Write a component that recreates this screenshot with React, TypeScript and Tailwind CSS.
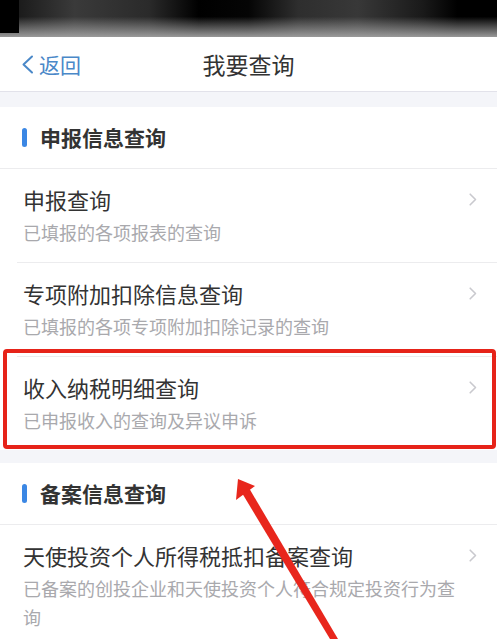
import React from "react";

type Item = { title: string; desc: string };

const GROUPS: { heading: string; items: Item[] }[] = [
  {
    heading: "申报信息查询",
    items: [
      { title: "申报查询", desc: "已填报的各项报表的查询" },
      { title: "专项附加扣除信息查询", desc: "已填报的各项专项附加扣除记录的查询" },
      { title: "收入纳税明细查询", desc: "已申报收入的查询及异议申诉" },
    ],
  },
  {
    heading: "备案信息查询",
    items: [
      {
        title: "天使投资个人所得税抵扣备案查询",
        desc: "已备案的创投企业和天使投资个人符合规定投资行为查询",
      },
    ],
  },
];

function Chevron() {
  return (
    <svg width="8" height="13" viewBox="0 0 8 13" fill="none" className="mt-[9px] shrink-0">
      <path d="M1.2 1.2l5.3 5.3-5.3 5.3" stroke="#c9c9ce" strokeWidth="1.6" strokeLinecap="round" strokeLinejoin="round" />
    </svg>
  );
}

function Row({ item, last }: { item: Item; last: boolean }) {
  return (
    <div className="pl-[17px]">
      <div className={`flex items-start pl-[6px] pr-[20px] pt-[15px] pb-[15px] ${last ? "" : "border-b border-[#ececee]"}`}>
        <div className="flex-1 min-w-0">
          <p className="text-[22px] leading-[30px] text-[#333]">{item.title}</p>
          <p className="mt-[4px] max-w-[438px] text-[18px] leading-[29px] text-[#a9a9ad]">{item.desc}</p>
        </div>
        <Chevron />
      </div>
    </div>
  );
}

function Section({ heading, items }: { heading: string; items: Item[] }) {
  return (
    <div className="bg-white">
      <div className="flex items-center h-[62px] pl-[22px] border-b border-[#ececee]">
        <span className="w-[5px] h-[19px] rounded-full bg-[#3b87e4] mr-[13px]" />
        <h2 className="text-[21px] font-bold text-[#333]">{heading}</h2>
      </div>
      {items.map((it, i) => (
        <Row key={it.title} item={it} last={i === items.length - 1} />
      ))}
    </div>
  );
}

export default function App() {
  return (
    <div className="relative w-[497px] h-[639px] overflow-hidden bg-[#f4f5f9] font-['Noto_Sans_CJK_SC','Noto_Sans',sans-serif]">
      {/* blurred status bar */}
      <div className="flex h-[37px] bg-[linear-gradient(to_bottom,rgba(0,0,0,0)_45%,rgba(160,160,160,0.95)_100%),linear-gradient(to_right,#111_0%,#3a3a3a_15%,#2a2a2a_30%,#000_40%,#050505_50%,#2e2e2e_60%,#383838_72%,#1a1a1a_85%,#000_92%,#000_100%)]">
        <div className="w-[19px] h-[33px] bg-black" />
      </div>

      {/* nav bar */}
      <div className="grid grid-cols-[1fr_auto_1fr] items-center h-[55px] bg-white border-b border-[#e2e2ea]">
        <div className="flex items-center pl-[21px] gap-[5px] text-[#4a88c8]">
          <svg width="13" height="19" viewBox="0 0 13 19" fill="none">
            <path d="M11 1.5L2.5 9.5 11 17.5" stroke="#4a88c8" strokeWidth="2" strokeLinecap="round" strokeLinejoin="round" />
          </svg>
          <span className="text-[21px] leading-none">返回</span>
        </div>
        <h1 className="text-[23px] leading-none text-[#333]">我要查询</h1>
        <div />
      </div>

      <div className="h-[15px]" />
      <Section heading={GROUPS[0].heading} items={GROUPS[0].items} />
      <div className="h-[13px]" />
      <Section heading={GROUPS[1].heading} items={GROUPS[1].items} />

      {/* annotation: highlight box */}
      <div className="absolute left-[3px] top-[349px] w-[493px] h-[100px] border-[4px] border-[#e62319] rounded-[4px] pointer-events-none" />

      {/* annotation: arrow */}
      <svg className="absolute inset-0 pointer-events-none" width="497" height="639" viewBox="0 0 497 639">
        <polygon points="238,479 236,500 255,486" fill="#e8261c" />
        <polygon points="242,493 249,488 338,639 330,639" fill="#e8261c" />
      </svg>
    </div>
  );
}
